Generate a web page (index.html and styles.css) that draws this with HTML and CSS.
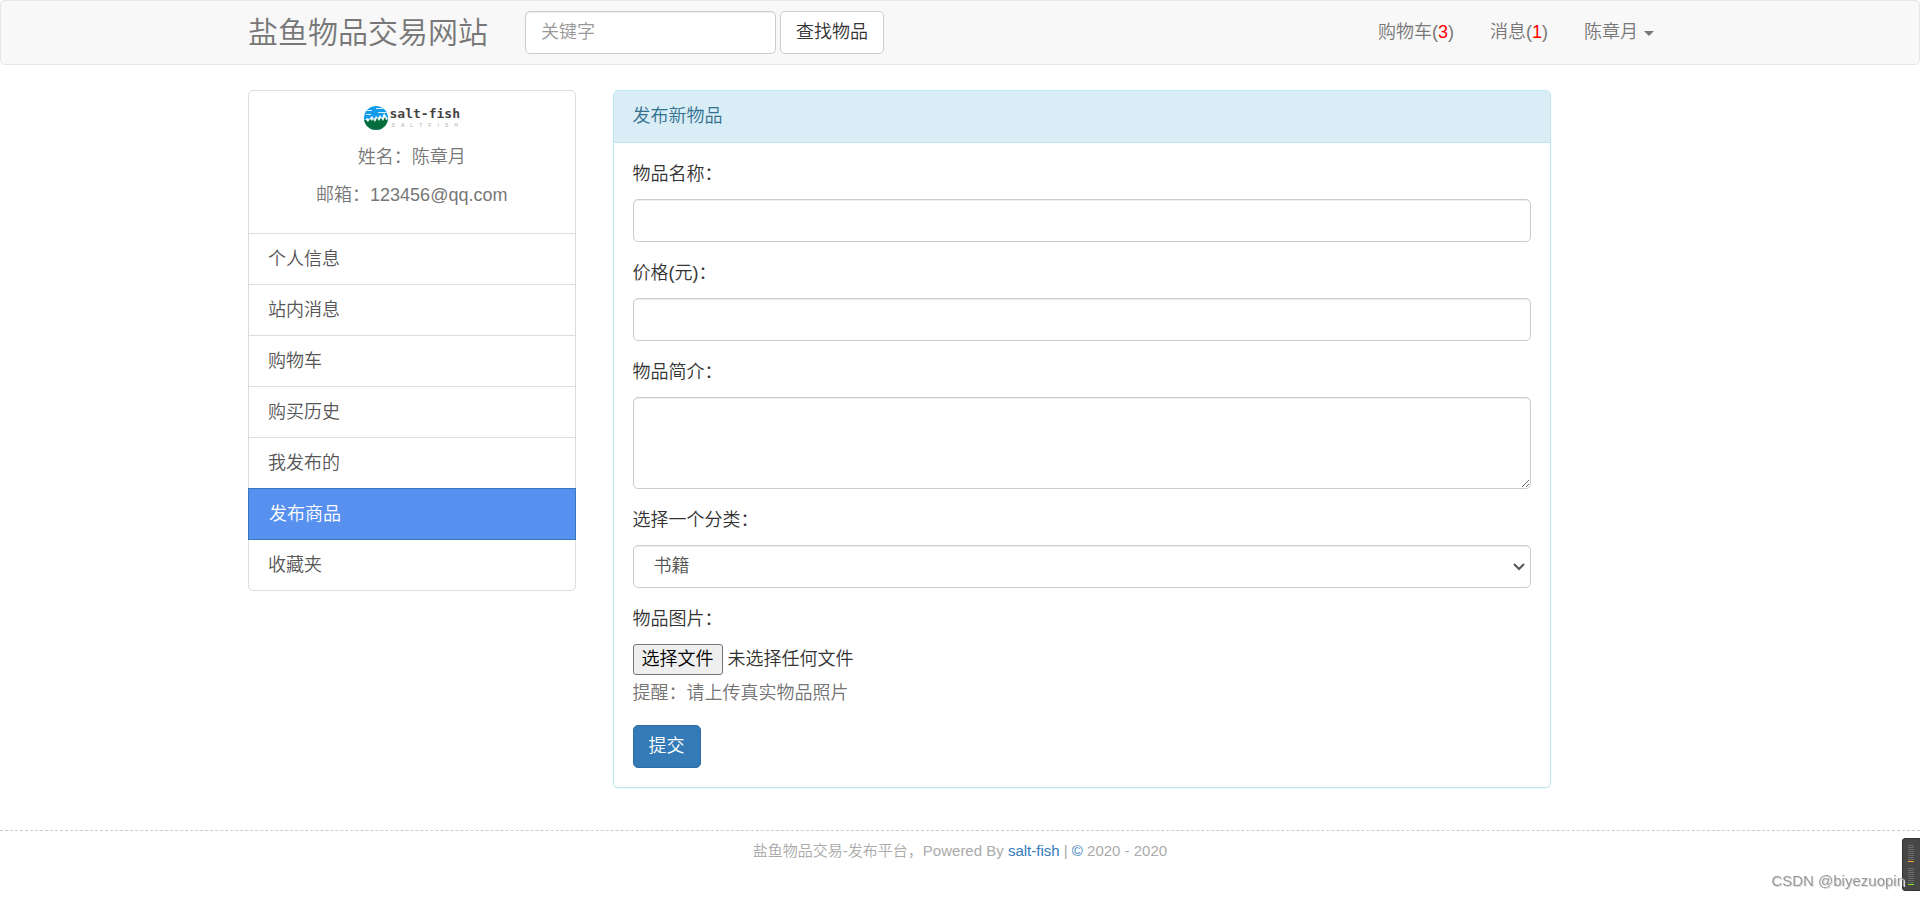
FILE: index.html
```html
<!DOCTYPE html>
<html lang="zh-CN">
<head>
<meta charset="utf-8">
<meta name="viewport" content="width=device-width, initial-scale=1">
<title>发布新物品</title>
<link rel="stylesheet" href="styles.css">
</head>
<body>
<header class="navbar">
  <div class="container navbar-inner">
    <a class="brand" href="#">盐鱼物品交易网站</a>
    <form class="search" role="search">
      <input class="control search-input" type="text" placeholder="关键字" aria-label="关键字">
      <button class="btn btn-default" type="button">查找物品</button>
    </form>
    <nav class="nav">
      <a href="#">购物车(<span class="count">3</span>)</a>
      <a href="#">消息(<span class="count">1</span>)</a>
      <a href="#">陈章月<span class="caret"></span></a>
    </nav>
  </div>
</header>

<main class="container row">
  <aside class="col-side">
    <div class="list">
      <div class="profile">
        <div class="logo">
          <svg class="logo-mark" viewBox="0 0 24 24" width="24" height="24" aria-hidden="true">
            <defs><clipPath id="disc"><circle cx="12" cy="12" r="12"/></clipPath></defs>
            <g clip-path="url(#disc)">
              <rect width="24" height="24" fill="#129bea"/>
              <path d="M0 4h8v1H0zM12 2h9v1h-9zM14 6h9v1h-9zM2 8h5v1H2z" fill="#d5efff"/>
              <path d="M0 15L3 12L5 13L8 10L10 13L12 10L14 12L16 9L18 12L20 7L24 13V24H0Z" fill="#e9f7fa"/>
              <path d="M0 14L2 14L4 16L6 13L8 15L9 13L11 16L13 12L15 15L17 12L19 15L21 11L22 14L24 13V24H0Z" fill="#056d3b"/>
            </g>
          </svg>
          <div class="logo-words">
            <span class="logo-name">salt-fish</span>
            <span class="logo-sub"><i>S</i><i>A</i><i>L</i><i>T</i><i>F</i><i>I</i><i>S</i><i>H</i></span>
          </div>
        </div>
        <p>姓名：陈章月</p>
        <p>邮箱：123456@qq.com</p>
      </div>
      <a class="item" href="#">个人信息</a>
      <a class="item" href="#">站内消息</a>
      <a class="item" href="#">购物车</a>
      <a class="item" href="#">购买历史</a>
      <a class="item" href="#">我发布的</a>
      <a class="item active" href="#">发布商品</a>
      <a class="item" href="#">收藏夹</a>
    </div>
  </aside>

  <section class="col-main">
    <div class="panel">
      <h1 class="panel-heading">发布新物品</h1>
      <form class="panel-body">
        <div class="group">
          <label for="name">物品名称：</label>
          <input class="control" id="name" type="text">
        </div>
        <div class="group">
          <label for="price">价格(元)：</label>
          <input class="control" id="price" type="text">
        </div>
        <div class="group">
          <label for="intro">物品简介：</label>
          <textarea class="control intro" id="intro"></textarea>
        </div>
        <div class="group">
          <label for="category">选择一个分类：</label>
          <select class="control category" id="category"><option>书籍</option></select>
        </div>
        <div class="group">
          <label for="photo">物品图片：</label>
          <div class="file">
            <input class="file-input" id="photo" type="file">
            <label class="file-button" for="photo">选择文件</label>
            <span>未选择任何文件</span>
          </div>
          <p class="help">提醒：请上传真实物品照片</p>
        </div>
        <button class="btn btn-primary" type="button">提交</button>
      </form>
    </div>
  </section>
</main>

<footer class="footer">盐鱼物品交易-发布平台，Powered By <a href="#">salt-fish</a> | <a href="#">©</a> 2020 - 2020</footer>

<div class="watermark">CSDN @biyezuopin</div>
<svg class="meter" viewBox="0 0 18 53" width="18" height="53" aria-hidden="true">
  <path d="M20 .5H3Q.5 .5 .5 3V50Q.5 52.5 3 52.5H20" fill="#474747" stroke="#333"/>
  <path d="M6 7.500H12M6 9.500H12M6 11.500H12M6 13.500H12M6 15.500H12M6 17.500H12M6 19.500H12M6 21.500H12M6 30.500H12M6 32.500H12M6 34.500H12M6 36.500H12M6 38.500H12M6 40.500H12M6 42.500H12M6 44.500H12" stroke="#6a6a6a"/>
  <path d="M6 23.500H12" stroke="#f7a32c"/>
  <path d="M6 46.500H12" stroke="#7ee81a"/>
</svg>
</body>
</html>
```
FILE: styles.css
```css
* { box-sizing: border-box; }

body {
  margin: 0;
  background: #fff;
  color: #333;
  font: 350 18px/25px "Liberation Sans", "Noto Sans CJK SC", sans-serif;
}

a { color: #337ab7; text-decoration: none; }
p { margin: 0; }
input, textarea, select, button { font: inherit; }

.container {
  width: 100%;
  max-width: 1462px;
  margin: 0 auto;
}

/* Top bar */
.navbar {
  margin-bottom: 25px;
  background: #f8f8f8;
  border: 1px solid #e7e7e7;
  border-radius: 5px;
}
.navbar-inner {
  display: flex;
  align-items: center;
  min-height: 63px;
  padding: 0 19px;
}
.brand {
  margin-right: 37px;
  color: #777;
  font-size: 30px;
  line-height: 36px;
}
.search { display: flex; gap: 4px; }
.search .search-input { width: 251px; }
.nav { display: flex; margin-left: auto; }
.nav a { padding: 0 18px; color: #777; }
.count { color: #f00; }
.caret {
  display: inline-block;
  margin-left: 6px;
  vertical-align: middle;
  border-top: 5px solid;
  border-left: 5px solid transparent;
  border-right: 5px solid transparent;
}

/* Controls */
.control {
  display: block;
  width: 100%;
  height: 43px;
  padding: 7px 15px;
  color: #555;
  background: #fff;
  border: 1px solid #ccc;
  border-radius: 5px;
  box-shadow: inset 0 1px 1px rgba(0, 0, 0, .075);
}
.control::placeholder { color: #999; opacity: 1; }
.intro { height: 92px; resize: vertical; }
.category {
  appearance: none;
  padding: 7px 20px;
  background: #fff url("data:image/svg+xml,%3Csvg xmlns='http://www.w3.org/2000/svg' width='12' height='8'%3E%3Cpath d='M1 1L6 6L11 1' fill='none' stroke='%23555' stroke-width='2'/%3E%3C/svg%3E") no-repeat right 5px center;
}
.btn {
  height: 43px;
  padding: 0 15px;
  border: 1px solid #ccc;
  border-radius: 5px;
  cursor: pointer;
}
.btn-default { color: #333; background: #fff; }
.btn-primary { color: #fff; background: #337ab7; border-color: #2e6da4; }

/* Columns */
.row { display: flex; align-items: flex-start; }
.col-side { flex: 0 0 25%; padding: 0 19px; }
.col-main { flex: 0 0 66.6667%; padding: 0 18px; }

/* Side menu */
.list {
  border: 1px solid #ddd;
  border-radius: 5px;
}
.profile {
  padding: 13px 15px 25px;
  color: #777;
  text-align: center;
}
.profile p { margin-bottom: 13px; }
.profile p:last-child { margin-bottom: 0; }
.logo {
  display: flex;
  justify-content: center;
  align-items: center;
  gap: 2px;
  height: 28px;
  margin-bottom: 13px;
}
.logo-words { display: grid; }
.logo-name {
  color: #444;
  font: bold 13px/14px "DejaVu Sans Mono", monospace;
}
.logo-sub {
  display: flex;
  justify-content: space-between;
  padding: 0 2px;
  color: #aaa;
  font-size: 5px;
  line-height: 8px;
}
.logo-sub i { font-style: normal; }
.item {
  display: block;
  padding: 13px 19px 12px;
  color: #555;
  border-top: 1px solid #ddd;
}
.item.active {
  margin: 0 -1px -1px;
  padding: 13px 20px 12px;
  color: #fff;
  background: #5890ef;
  border: 1px solid #337ab7;
}
.item.active + .item { border-top-color: transparent; }

/* Form panel */
.panel {
  border: 1px solid #bce8f1;
  border-radius: 5px;
  box-shadow: 0 1px 1px rgba(0, 0, 0, .05);
}
.panel-heading {
  margin: 0;
  padding: 13px 19px;
  color: #31708f;
  background: #d9edf7;
  border-bottom: 1px solid #bce8f1;
  border-radius: 4px 4px 0 0;
  font-size: 18px;
  font-weight: 350;
}
.panel-body { padding: 19px; }
.group { margin-bottom: 19px; }
.group > label { display: block; margin-bottom: 12px; }
.file { display: flex; align-items: center; gap: 5px; }
.file-input {
  position: absolute;
  width: 1px;
  height: 1px;
  overflow: hidden;
  opacity: 0;
}
.file-button {
  padding: 2px 8px;
  color: #000;
  background: #efefef;
  border: 1px solid #767676;
  border-radius: 3px;
}
.help { margin-top: 6px; color: #737373; }

/* Footer */
.footer {
  margin-top: 42px;
  padding: 9px 0 35px;
  color: #aaa;
  border-top: 1px dashed #ccc;
  font-size: 15px;
  line-height: 22px;
  text-align: center;
}
.meter { position: fixed; right: 0; bottom: 7px; }
.watermark {
  position: fixed;
  right: 15px;
  bottom: 5px;
  z-index: 1;
  color: #999;
  font-size: 15px;
  text-shadow: 1px 1px 0 #ddd;
}
```
